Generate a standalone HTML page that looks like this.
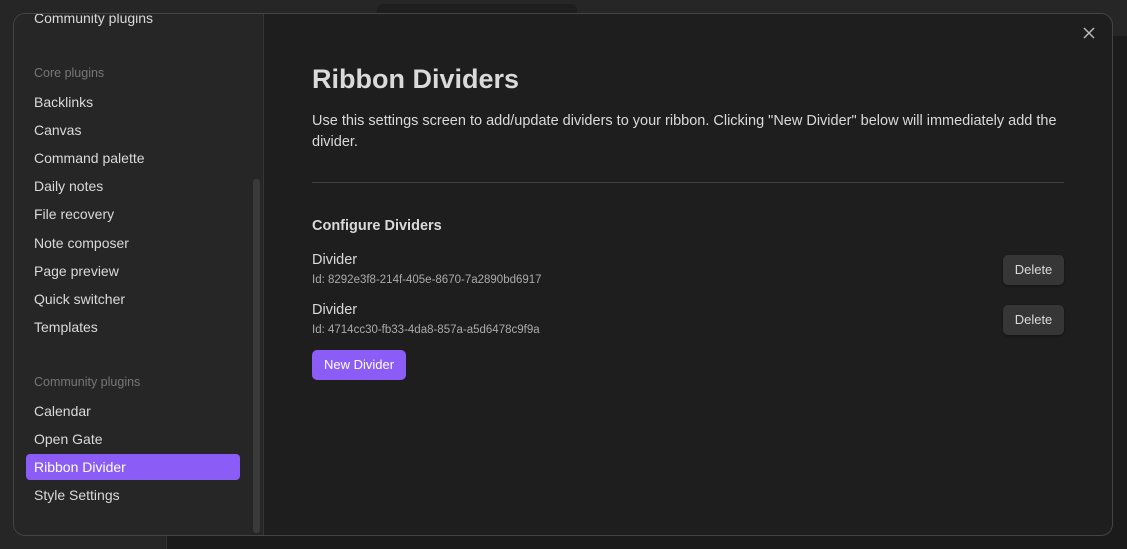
<!DOCTYPE html>
<html><head><style>
*{margin:0;padding:0;box-sizing:border-box}
body{width:1127px;height:549px;background:#1b1b1b;font-family:"Liberation Sans",sans-serif;position:relative;overflow:hidden;color:#dadada}
.top{position:absolute;left:0;top:0;width:1127px;height:36px;background:#262626}
.tab{position:absolute;left:377px;top:4px;width:200px;height:32px;background:#1e1e1e;border-radius:6px 6px 0 0}
.lp{position:absolute;left:0;top:36px;width:167px;height:513px;background:#262626;border-right:1px solid #333}
.modal{position:absolute;left:13px;top:13px;width:1100px;height:523px;background:#1e1e1e;border:1px solid #444;border-radius:12px;overflow:hidden}
.side{position:absolute;left:0;top:0;width:250px;height:100%;background:#262626;border-right:1px solid #363636}
.it{position:absolute;left:20px;font-size:14px;color:#dadada;line-height:20px}
.hd{position:absolute;left:20px;font-size:12.5px;color:#777}
.sel{position:absolute;left:12px;top:440px;width:214px;height:26px;background:#8b5cf6;border-radius:4px}
.sb{position:absolute;left:239px;top:165px;width:7px;height:354px;background:#3a3a3a;border-radius:3px}
.c{position:absolute;left:298px}
.btn{position:absolute;left:989px;width:61px;height:30px;background:#363636;border-radius:5px;font-size:13px;color:#dadada;text-align:center;line-height:30px;box-shadow:0 1px 2px rgba(0,0,0,.4)}
</style></head><body>
<div class="top"></div><div class="tab"></div>
<div class="lp"></div>
<div class="modal">
 <div class="side">
  <div class="it" style="top:-6px">Community plugins</div>
  <div class="hd" style="top:52px">Core plugins</div>
  <div class="it" style="top:78px">Backlinks</div>
  <div class="it" style="top:106px">Canvas</div>
  <div class="it" style="top:134px">Command palette</div>
  <div class="it" style="top:162px">Daily notes</div>
  <div class="it" style="top:190px">File recovery</div>
  <div class="it" style="top:219px">Note composer</div>
  <div class="it" style="top:247px">Page preview</div>
  <div class="it" style="top:275px">Quick switcher</div>
  <div class="it" style="top:303px">Templates</div>
  <div class="hd" style="top:361px">Community plugins</div>
  <div class="it" style="top:387px">Calendar</div>
  <div class="it" style="top:415px">Open Gate</div>
  <div class="sel"></div>
  <div class="it" style="top:443px;color:#fff">Ribbon Divider</div>
  <div class="it" style="top:471px">Style Settings</div>
  <div class="sb"></div>
 </div>
 <svg style="position:absolute;left:1068px;top:12px" width="14" height="14" viewBox="0 0 14 14"><path d="M2 2L12 12M12 2L2 12" stroke="#bbb" stroke-width="1.5"/></svg>
 <div class="c" style="top:50px;font-size:27px;font-weight:bold;color:#dadada">Ribbon Dividers</div>
 <div class="c" style="top:97px;width:752px;font-size:14.5px;line-height:21px">Use this settings screen to add/update dividers to your ribbon. Clicking "New Divider" below will immediately add the divider.</div>
 <div class="c" style="top:168px;width:752px;height:1px;background:#3f3f3f"></div>
 <div class="c" style="top:204px;font-size:14.5px;font-weight:bold">Configure Dividers</div>
 <div class="c" style="top:238px;font-size:14.5px">Divider</div>
 <div class="c" style="top:260px;font-size:11.5px;color:#aaa">Id: 8292e3f8-214f-405e-8670-7a2890bd6917</div>
 <div class="btn" style="top:241px">Delete</div>
 <div class="c" style="top:288px;font-size:14.5px">Divider</div>
 <div class="c" style="top:310px;font-size:11.5px;color:#aaa">Id: 4714cc30-fb33-4da8-857a-a5d6478c9f9a</div>
 <div class="btn" style="top:291px">Delete</div>
 <div class="c" style="top:336px;width:94px;height:30px;background:#8b5cf6;border-radius:5px;font-size:13px;color:#fff;text-align:center;line-height:30px">New Divider</div>
</div>
</body></html>
